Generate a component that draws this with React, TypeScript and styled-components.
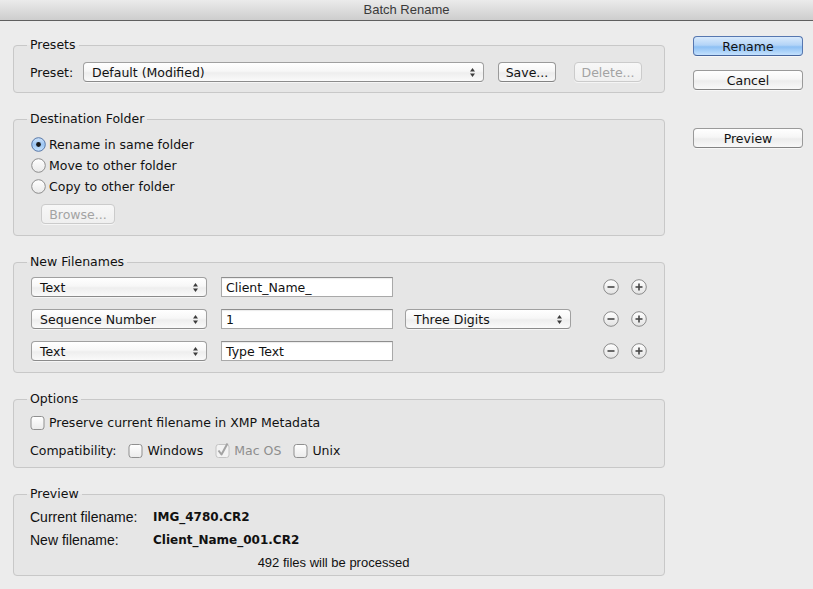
import React from "react";
import styled, { createGlobalStyle, css } from "styled-components";

const GlobalStyle = createGlobalStyle`
  html, body { margin: 0; padding: 0; background: #ececec; }
  body { font-family: "DejaVu Sans", "Noto Sans", sans-serif; font-size: 12.5px; color: #111; }
  * { box-sizing: border-box; }
`;

const Window = styled.div`
  width: 813px;
  height: 589px;
  background: #ececec;
  display: flex;
  flex-direction: column;
  overflow: hidden;
`;

const TitleBar = styled.div`
  height: 21px;
  flex: none;
  background: linear-gradient(to bottom, #ebebeb 0%, #dcdcdc 50%, #cdcdcd 100%);
  border-bottom: 1px solid #5f5f5f;
  display: flex;
  align-items: center;
  justify-content: center;
  font-family: "Liberation Sans", Arial, sans-serif;
  font-size: 13px;
  color: #3a3a3a;
  padding-bottom: 1px;
`;

const Content = styled.div`
  display: flex;
  padding: 15px 10px 0 13px;
`;

const LeftColumn = styled.div`
  width: 652px;
  margin-top: 1px;
  display: flex;
  flex-direction: column;
  gap: 18px;
`;

const RightColumn = styled.div`
  width: 110px;
  margin-left: 28px;
  display: flex;
  flex-direction: column;
`;

const Group = styled.fieldset`
  margin: 0;
  padding: 0;
  min-width: 0;
  border: 1px solid #c8c8c8;
  border-radius: 4px;
  background: #e6e6e6;
`;

const Legend = styled.legend`
  padding: 0 3px;
  margin-left: 13px;
  line-height: 16px;
  font-size: 12.5px;
  color: #111;
`;

const GroupBody = styled.div<{ $pt: number; $pb: number; $pl?: number }>`
  padding: ${(p) => p.$pt}px 17px ${(p) => p.$pb}px ${(p) => p.$pl ?? 17}px;
`;

const PresetRow = styled.div`
  display: grid;
  grid-template-columns: 53px 415px 76px 68px;
  align-items: center;
`;

const Label = styled.span`
  white-space: nowrap;
  color: #111;
`;

const buttonBase = css`
  height: 20px;
  border-radius: 4px;
  font-family: "DejaVu Sans", "Noto Sans", sans-serif;
  font-size: 12.5px;
  padding: 0;
  display: flex;
  align-items: center;
  justify-content: center;
  white-space: nowrap;
`;

const PushButton = styled.button<{ $width: number; $variant?: "default" | "disabled" | "normal" }>`
  ${buttonBase};
  width: ${(p) => p.$width}px;
  justify-self: start;
  color: #111;
  border: 1px solid #9a9a9a;
  border-bottom-color: #838383;
  background: linear-gradient(to bottom, #ffffff 0%, #f6f6f6 45%, #ececec 55%, #f8f8f8 100%);
  box-shadow: 0 1px 0 rgba(255, 255, 255, 0.6);
  ${(p) =>
    p.$variant === "default" &&
    css`
      border-color: #5677b0;
      border-bottom-color: #46659c;
      background: linear-gradient(to bottom, #d9eafc 0%, #b3d4f7 45%, #8dc0f4 55%, #c4e1fd 100%);
    `}
  ${(p) =>
    p.$variant === "disabled" &&
    css`
      color: #a3a3a3;
      border-color: #cbcbcb;
      background: linear-gradient(to bottom, #f7f7f7 0%, #efefef 100%);
    `}
`;

const SelectBox = styled.div<{ $width: number }>`
  ${buttonBase};
  width: ${(p) => p.$width}px;
  justify-content: space-between;
  padding: 0 7px 0 8px;
  border: 1px solid #a0a0a0;
  border-bottom-color: #8b8b8b;
  background: linear-gradient(to bottom, #ffffff 0%, #f7f7f7 45%, #eeeeee 55%, #fafafa 100%);
  box-shadow: 0 1px 0 rgba(255, 255, 255, 0.6);
  color: #111;
`;

const Arrows = () => (
  <svg width="7" height="11" viewBox="0 0 7 11">
    <polygon points="1,4.5 3.5,1 6,4.5" fill="#3c3c3c" />
    <polygon points="1,6.5 3.5,10 6,6.5" fill="#3c3c3c" />
  </svg>
);

const Select: React.FC<{ width: number; value: string }> = ({ width, value }) => (
  <SelectBox $width={width}>
    <span>{value}</span>
    <Arrows />
  </SelectBox>
);

const RadioList = styled.div`
  display: flex;
  flex-direction: column;
`;

const OptionRow = styled.label<{ $h: number; $gap: number }>`
  height: ${(p) => p.$h}px;
  display: flex;
  align-items: center;
  gap: ${(p) => p.$gap}px;
  color: #111;
  white-space: nowrap;
`;

const Radio: React.FC<{ checked?: boolean }> = ({ checked }) => (
  <svg width="15" height="15" viewBox="0 0 15 15">
    <defs>
      <linearGradient id="radOff" x1="0" y1="0" x2="0" y2="1">
        <stop offset="0" stopColor="#ffffff" />
        <stop offset="1" stopColor="#e9e9e9" />
      </linearGradient>
      <linearGradient id="radOn" x1="0" y1="0" x2="0" y2="1">
        <stop offset="0" stopColor="#cfe3fa" />
        <stop offset="0.5" stopColor="#9cc6f3" />
        <stop offset="1" stopColor="#c8e3fd" />
      </linearGradient>
    </defs>
    <circle
      cx="7.5"
      cy="7.5"
      r="6.8"
      fill={checked ? "url(#radOn)" : "url(#radOff)"}
      stroke={checked ? "#5677a8" : "#8d8d8d"}
      strokeWidth="1"
    />
    {checked && <circle cx="7.5" cy="7.5" r="2.4" fill="#1a1a1a" />}
  </svg>
);

const BrowseWrap = styled.div`
  margin-top: 7px;
  padding-left: 10px;
  display: flex;
`;

const FilenameGrid = styled.div`
  display: grid;
  grid-template-columns: 176px 174px 166px 1fr 16px 16px;
  column-gap: 12px;
  row-gap: 12px;
  align-items: center;
`;

const TextField = styled.div`
  justify-self: end;
  width: 172px;
  height: 20px;
  background: #fff;
  border: 1px solid #a9a9a9;
  border-top-color: #8e8e8e;
  box-shadow: inset 0 1px 1px rgba(0, 0, 0, 0.08);
  padding: 1px 4px 0;
  display: flex;
  align-items: center;
  color: #111;
  white-space: nowrap;
`;

const Spacer = styled.div``;

const RoundButton: React.FC<{ kind: "minus" | "plus" }> = ({ kind }) => (
  <svg width="16" height="16" viewBox="0 0 16 16">
    <defs>
      <linearGradient id="rbg" x1="0" y1="0" x2="0" y2="1">
        <stop offset="0" stopColor="#ffffff" />
        <stop offset="1" stopColor="#e2e2e2" />
      </linearGradient>
    </defs>
    <circle cx="8" cy="8" r="7.3" fill="url(#rbg)" stroke="#8a8a8a" strokeWidth="1" />
    <line x1="4.5" y1="8" x2="11.5" y2="8" stroke="#474747" strokeWidth="1.6" />
    {kind === "plus" && <line x1="8" y1="4.5" x2="8" y2="11.5" stroke="#474747" strokeWidth="1.6" />}
  </svg>
);

const OptionsStack = styled.div`
  display: flex;
  flex-direction: column;
  gap: 10px;
`;

const CompatRow = styled.div`
  height: 18px;
  display: flex;
  align-items: center;
  gap: 12px;
`;

const CheckItem = styled.label<{ $disabled?: boolean }>`
  display: flex;
  align-items: center;
  gap: 4px;
  white-space: nowrap;
  color: ${(p) => (p.$disabled ? "#8e8e8e" : "#111")};
`;

const Checkbox: React.FC<{ checked?: boolean; disabled?: boolean }> = ({ checked, disabled }) => (
  <svg width="15" height="15" viewBox="0 0 15 15" style={{ overflow: "visible" }}>
    <defs>
      <linearGradient id="cbg" x1="0" y1="0" x2="0" y2="1">
        <stop offset="0" stopColor="#ffffff" />
        <stop offset="1" stopColor="#ebebeb" />
      </linearGradient>
    </defs>
    <rect
      x="1"
      y="1.5"
      width="13"
      height="13"
      rx="2.5"
      fill={disabled ? "#f3f3f3" : "url(#cbg)"}
      stroke={disabled ? "#c4c4c4" : "#8f8f8f"}
      strokeWidth="1"
    />
    {checked && (
      <path
        d="M3.5 7.5 L6.5 11.5 L12.5 0.5"
        fill="none"
        stroke={disabled ? "#a3a3a3" : "#222"}
        strokeWidth="2"
        strokeLinejoin="round"
      />
    )}
  </svg>
);

const PreviewGrid = styled.div`
  display: grid;
  grid-template-columns: 123px 1fr;
  grid-template-rows: 22px 22px 20px;
  row-gap: 1px;
  align-items: center;
`;

const PreviewLabel = styled.span`
  font-family: "Liberation Sans", Arial, sans-serif;
  font-size: 14px;
  color: #111;
  white-space: nowrap;
`;

const PreviewValue = styled.span`
  font-family: "DejaVu Sans", sans-serif;
  font-weight: bold;
  font-size: 12px;
  color: #111;
  white-space: nowrap;
`;

const PreviewNote = styled.span`
  grid-column: 1 / -1;
  justify-self: center;
  font-family: "Liberation Sans", Arial, sans-serif;
  font-size: 13px;
  color: #111;
  padding-right: 10px;
`;

const ButtonStack = styled.div<{ $mt: number }>`
  margin-top: ${(p) => p.$mt}px;
  display: flex;
`;

const rows = [
  { type: "Text", value: "Client_Name_", extra: null as string | null },
  { type: "Sequence Number", value: "1", extra: "Three Digits" },
  { type: "Text", value: "Type Text", extra: null as string | null },
];

export default function App() {
  return (
    <>
      <GlobalStyle />
      <Window>
        <TitleBar>Batch Rename</TitleBar>
        <Content>
          <LeftColumn>
            <Group>
              <Legend>Presets</Legend>
              <GroupBody $pt={9} $pb={10} $pl={16}>
                <PresetRow>
                  <Label>Preset:</Label>
                  <Select width={401} value="Default (Modified)" />
                  <PushButton $width={58}>Save...</PushButton>
                  <PushButton $width={68} $variant="disabled">
                    Delete...
                  </PushButton>
                </PresetRow>
              </GroupBody>
            </Group>

            <Group>
              <Legend>Destination Folder</Legend>
              <GroupBody $pt={7} $pb={11} $pl={17}>
                <RadioList>
                  <OptionRow $h={21} $gap={3}>
                    <Radio checked />
                    Rename in same folder
                  </OptionRow>
                  <OptionRow $h={21} $gap={3}>
                    <Radio />
                    Move to other folder
                  </OptionRow>
                  <OptionRow $h={21} $gap={3}>
                    <Radio />
                    Copy to other folder
                  </OptionRow>
                </RadioList>
                <BrowseWrap>
                  <PushButton $width={74} $variant="disabled">
                    Browse...
                  </PushButton>
                </BrowseWrap>
              </GroupBody>
            </Group>

            <Group>
              <Legend>New Filenames</Legend>
              <GroupBody $pt={7} $pb={11}>
                <FilenameGrid>
                  {rows.map((r, i) => (
                    <React.Fragment key={i}>
                      <Select width={176} value={r.type} />
                      <TextField>{r.value}</TextField>
                      {r.extra ? <Select width={166} value={r.extra} /> : <Spacer />}
                      <Spacer />
                      <RoundButton kind="minus" />
                      <RoundButton kind="plus" />
                    </React.Fragment>
                  ))}
                </FilenameGrid>
              </GroupBody>
            </Group>

            <Group>
              <Legend>Options</Legend>
              <GroupBody $pt={6} $pb={8} $pl={16}>
                <OptionsStack>
                  <OptionRow $h={18} $gap={4}>
                    <Checkbox />
                    Preserve current filename in XMP Metadata
                  </OptionRow>
                  <CompatRow>
                    <Label>Compatibility:</Label>
                    <CheckItem>
                      <Checkbox />
                      Windows
                    </CheckItem>
                    <CheckItem $disabled>
                      <Checkbox checked disabled />
                      Mac OS
                    </CheckItem>
                    <CheckItem>
                      <Checkbox />
                      Unix
                    </CheckItem>
                  </CompatRow>
                </OptionsStack>
              </GroupBody>
            </Group>

            <Group>
              <Legend>Preview</Legend>
              <GroupBody $pt={4} $pb={3} $pl={16}>
                <PreviewGrid>
                  <PreviewLabel>Current filename:</PreviewLabel>
                  <PreviewValue>IMG_4780.CR2</PreviewValue>
                  <PreviewLabel>New filename:</PreviewLabel>
                  <PreviewValue>Client_Name_001.CR2</PreviewValue>
                  <PreviewNote>492 files will be processed</PreviewNote>
                </PreviewGrid>
              </GroupBody>
            </Group>
          </LeftColumn>

          <RightColumn>
            <ButtonStack $mt={0}>
              <PushButton $width={110} $variant="default">
                Rename
              </PushButton>
            </ButtonStack>
            <ButtonStack $mt={14}>
              <PushButton $width={110}>Cancel</PushButton>
            </ButtonStack>
            <ButtonStack $mt={38}>
              <PushButton $width={110}>Preview</PushButton>
            </ButtonStack>
          </RightColumn>
        </Content>
      </Window>
    </>
  );
}
